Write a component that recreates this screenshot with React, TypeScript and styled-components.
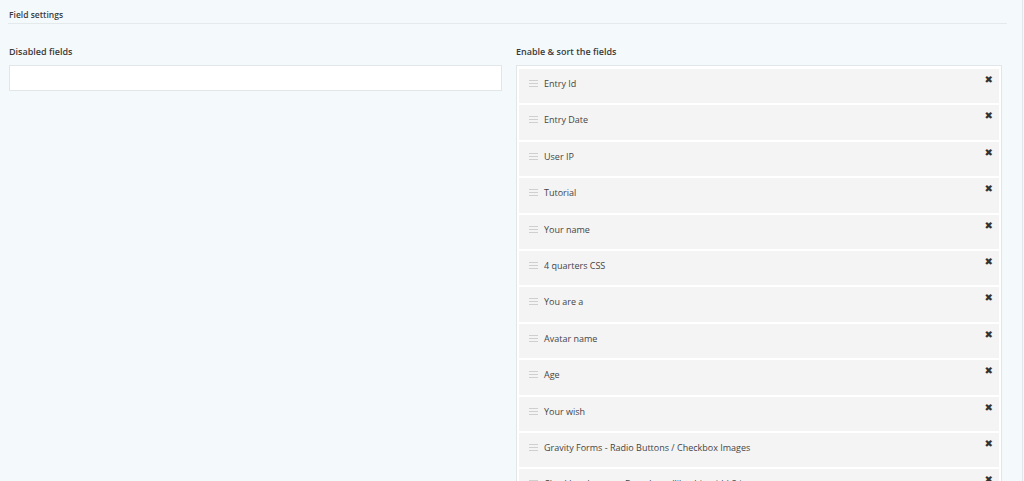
import * as React from "react";
import styled, { createGlobalStyle } from "styled-components";

const GlobalStyle = createGlobalStyle`
  html, body {
    margin: 0;
    padding: 0;
    background: #f4f9fc;
    font-family: "Open Sans", "Noto Sans", sans-serif;
    color: #444;
  }
`;

const FIELDS = [
  "Entry Id",
  "Entry Date",
  "User IP",
  "Tutorial",
  "Your name",
  "4 quarters CSS",
  "You are a",
  "Avatar name",
  "Age",
  "Your wish",
  "Gravity Forms - Radio Buttons / Checkbox Images",
  "Checkbox Images - Dropdown (like this with) 3 images",
];

const DragHandle = () => (
  <svg width="9" height="7" viewBox="0 0 9 7">
    <rect x="0" y="0" width="9" height="1" fill="#cfcfcf" />
    <rect x="0" y="3" width="9" height="1" fill="#cfcfcf" />
    <rect x="0" y="6" width="9" height="1" fill="#cfcfcf" />
  </svg>
);

const App = () => {
  return (
    <Page>
      <GlobalStyle />
      <Section>
        <SectionTitle>Field settings</SectionTitle>
        <Columns>
          <Column>
            <Label>Disabled fields</Label>
            <EmptyBox />
          </Column>
          <Column>
            <Label>Enable &amp; sort the fields</Label>
            <SortList>
              {FIELDS.map((name, indx) => (
                <Item key={indx}>
                  <Handle>
                    <DragHandle />
                  </Handle>
                  <ItemName>{name}</ItemName>
                  <Remove>✖</Remove>
                </Item>
              ))}
            </SortList>
          </Column>
        </Columns>
      </Section>
    </Page>
  );
};

export default App;

const Page = styled.div`
  width: 1022px;
  height: 481px;
  overflow: hidden;
  border-right: 1px solid #e1e7eb;
  background: #f4f9fc;
`;

const Section = styled.div`
  padding: 0 0 0 8px;
`;

const SectionTitle = styled.div`
  width: 999px;
  height: 24px;
  box-sizing: border-box;
  padding: 9px 0 0 1px;
  font-size: 8.5px;
  font-weight: 600;
  color: #3c3c3c;
  border-bottom: 1px solid #e4e9ec;
`;

const Columns = styled.div`
  display: grid;
  grid-template-columns: 493px 486px;
  column-gap: 14px;
  padding: 21px 0 0 1px;
`;

const Column = styled.div`
  display: flex;
  flex-direction: column;
`;

const Label = styled.div`
  font-size: 9px;
  font-weight: 600;
  color: #3a3a3a;
  line-height: 14px;
  height: 14px;
  margin-bottom: 6px;
`;

const EmptyBox = styled.div`
  height: 24px;
  background: #fff;
  border: 1px solid #e3e6e8;
`;

const SortList = styled.div`
  background: #fff;
  border: 1px solid #e3e6e8;
  padding: 3px 2px;
  display: flex;
  flex-direction: column;
  gap: 2px;
`;

const Item = styled.div`
  height: 34.4px;
  box-sizing: border-box;
  display: flex;
  align-items: flex-start;
  padding: 7px 6px 0 10px;
  background: #f4f4f4;
  font-size: 9px;
  line-height: 15px;
`;

const Handle = styled.span`
  display: flex;
  align-items: center;
  height: 15px;
  margin-right: 6px;
`;

const ItemName = styled.span`
  flex: 1;
  color: #444;
`;

const Remove = styled.span`
  font-size: 10px;
  line-height: 10px;
  color: #333;
  margin-top: -1px;
  font-family: "DejaVu Sans", sans-serif;
`;
